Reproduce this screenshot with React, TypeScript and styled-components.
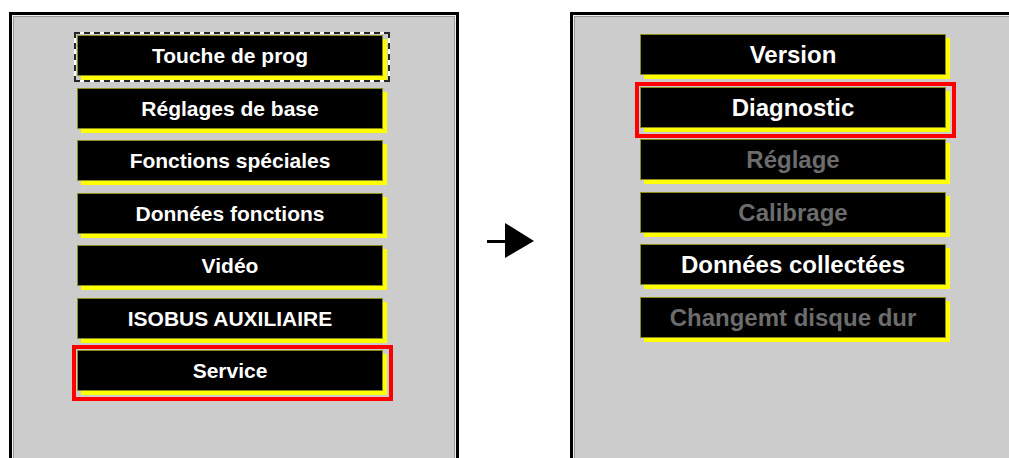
import React from 'react';
import styled, { createGlobalStyle, css } from 'styled-components';

const GlobalStyle = createGlobalStyle`
    html, body {
        margin: 0;
        padding: 0;
        background: #fff;
        overflow: hidden;
    }
`;

const Page = styled.div`
    display: flex;
    align-items: flex-start;
    padding: 12px 0 0 9px;
    width: 1100px;
    height: 458px;
    font-family: "Liberation Sans", Arial, sans-serif;
`;

const Panel = styled.div<{ $padTop: number; $padLeft: number }>`
    box-sizing: border-box;
    width: 450px;
    height: 470px;
    flex-shrink: 0;
    background: #cccccc;
    border: 3px solid #000;
    box-shadow: inset 0 0 0 1px #f2f2f2, inset 0 0 0 2px #9a9a9a;
    padding: ${({ $padTop }) => $padTop}px 0 0 ${({ $padLeft }) => $padLeft}px;
`;

const List = styled.div`
    display: flex;
    flex-direction: column;
    gap: 7.5px;
`;

type Mark = 'focus' | 'selected' | undefined;

const Slot = styled.div<{ $mark: Mark }>`
    position: relative;
    width: 310px;
    height: 45px;

    ${({ $mark }) => $mark === 'selected' && css`
        &::after {
            content: '';
            position: absolute;
            inset: -5px -6px -6px -5px;
            border: 4px solid #ff0000;
        }
    `}

    ${({ $mark }) => $mark === 'focus' && css`
        &::before, &::after {
            content: '';
            position: absolute;
            inset: -3px -3px -2px -3px;
            border: 2px solid #fff;
        }
        &::after {
            border: 2px dashed #262626;
        }
    `}
`;

const Key = styled.div<{ $size: number; $disabled?: boolean }>`
    box-sizing: border-box;
    width: 306px;
    height: 41px;
    background: #000;
    border: 1px solid #8c8c1a;
    box-shadow: 4px 4px 0 #ffff00;
    color: ${({ $disabled }) => ($disabled ? '#6c6c6c' : '#fff')};
    font-weight: bold;
    font-size: ${({ $size }) => $size}px;
    line-height: 39px;
    text-align: center;
    white-space: nowrap;
`;

const Between = styled.div`
    width: 111px;
    flex-shrink: 0;
    padding: 211px 0 0 28px;
    box-sizing: border-box;
`;

interface Item {
    label: string;
    mark?: Mark;
    disabled?: boolean;
}

const leftItems: Item[] = [
    { label: 'Touche de prog', mark: 'focus' },
    { label: 'Réglages de base' },
    { label: 'Fonctions spéciales' },
    { label: 'Données fonctions' },
    { label: 'Vidéo' },
    { label: 'ISOBUS AUXILIAIRE' },
    { label: 'Service', mark: 'selected' },
];

const rightItems: Item[] = [
    { label: 'Version' },
    { label: 'Diagnostic', mark: 'selected' },
    { label: 'Réglage', disabled: true },
    { label: 'Calibrage', disabled: true },
    { label: 'Données collectées' },
    { label: 'Changemt disque dur', disabled: true },
];

const Menu: React.FC<{ items: Item[]; size: number }> = ({ items, size }) => (
    <List>
        {items.map(({ label, mark, disabled }) => (
            <Slot key={label} $mark={mark}>
                <Key $size={size} $disabled={disabled}>{label}</Key>
            </Slot>
        ))}
    </List>
);

const Arrow = () => (
    <svg width="47" height="36" viewBox="0 0 47 36">
        <rect x="0" y="17" width="20" height="3" fill="#000" />
        <polygon points="18,0 47,18 18,35" fill="#000" />
    </svg>
);

const App: React.FC = () => (
    <>
        <GlobalStyle />
        <Page>
            <Panel $padTop={20} $padLeft={65}>
                <Menu items={leftItems} size={21} />
            </Panel>
            <Between>
                <Arrow />
            </Between>
            <Panel $padTop={19} $padLeft={67}>
                <Menu items={rightItems} size={24} />
            </Panel>
        </Page>
    </>
);

export default App;
